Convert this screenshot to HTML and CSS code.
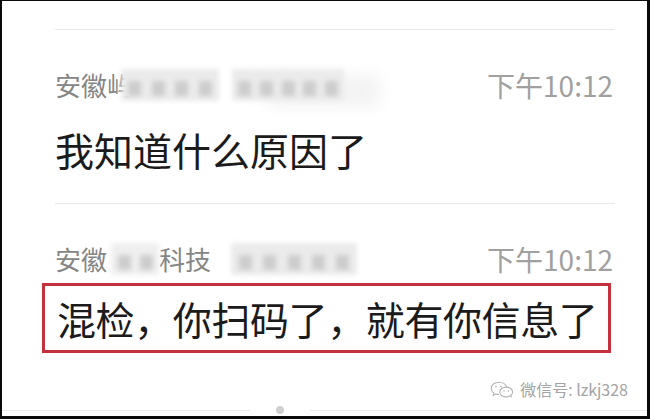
FILE: index.html
```html
<!DOCTYPE html>
<html>
<head>
    <meta charset="utf-8">
    <title>聊天记录</title>
    <link rel="stylesheet" href="styles.css">
</head>
<body>
    <div class="frame">
        <div class="chat">
            <div class="rule"></div>

            <!-- first message -->
            <div class="msg">
                <div class="meta">
                    <span class="name">安徽<span class="cut">屿</span><span class="mosaic m-a"><i></i><i></i><i></i><i></i></span><span class="mosaic m-b"><i></i><i></i><i></i><i></i><i></i></span></span>
                    <span class="time">下午10:12</span>
                </div>
                <p class="text">我知道什么原因了</p>
            </div>

            <div class="rule"></div>

            <!-- second message, marked with the red box -->
            <div class="msg">
                <div class="meta">
                    <span class="name">安徽<span class="mosaic m-c"><i></i><i></i></span>科技<span class="mosaic m-d"><i></i><i></i><i></i><i></i><i></i></span></span>
                    <span class="time">下午10:12</span>
                </div>
                <p class="text marked">混检，你扫码了，就有你信息了</p>
            </div>
        </div>

        <div class="watermark">
            <svg class="wx" width="24" height="17" viewBox="0 0 24 17">
                <path d="M9 1.2C4.6 1.2 1.2 4 1.2 7.4c0 1.9 1 3.6 2.7 4.8l-.7 2.3 2.7-1.4c1 .3 2 .4 3.1.4" fill="none" stroke="#b4b4b4" stroke-width="1.1"/>
                <path d="M9 1.2c3.9 0 7.1 2.3 7.7 5.3" fill="none" stroke="#b4b4b4" stroke-width="1.1"/>
                <ellipse cx="16.2" cy="11" rx="6.4" ry="4.9" fill="none" stroke="#b4b4b4" stroke-width="1.1"/>
                <path d="M20.4 14.8l1.2 1.6" stroke="#b4b4b4" stroke-width="1.1"/>
                <circle cx="6" cy="5.6" r=".9" fill="#b4b4b4"/>
                <circle cx="11" cy="5.6" r=".9" fill="#b4b4b4"/>
                <circle cx="14" cy="10" r=".8" fill="#b4b4b4"/>
                <circle cx="18.4" cy="10" r=".8" fill="#b4b4b4"/>
            </svg>
            <span>微信号: lzkj328</span>
        </div>

        <div class="foot">
            <span class="line left"></span>
            <span class="dot"></span>
            <span class="line right"></span>
        </div>
    </div>
</body>
</html>
```

FILE: styles.css
```css
* {
    box-sizing: border-box;
}

body {
    margin: 0;
    background: #000;
    font-family: "Noto Sans CJK SC", "Noto Sans", sans-serif;
}

/* screenshot frame with the dark edge round it */
.frame {
    width: 650px;
    height: 419px;
    background: #fff;
    border-style: solid;
    border-color: #0a0a0a;
    border-width: 1px 3px 3px 2px;
    display: flex;
    flex-direction: column;
    overflow: hidden;
}

.chat {
    padding: 0 32px 0 53px;
}

.rule {
    height: 1px;
    background: #e8e8e8;
    margin-top: 28px;
}

.msg + .rule {
    margin-top: 30px;
}

.meta {
    display: flex;
    justify-content: space-between;
    align-items: center;
    height: 34px;
    margin-top: 38px;
    font-size: 26px;
    line-height: 34px;
}

.name {
    color: #858585;
    display: flex;
    align-items: center;
}

.time {
    color: #a0a0a0;
    font-size: 28px;
    margin-right: 2px;
}

/* blurred name parts, laid over the hidden characters */
.mosaic {
    display: inline-flex;
    align-items: flex-end;
    justify-content: space-around;
    height: 32px;
    padding: 0 2px 5px;
    background: #ebebeb;
    filter: blur(2.4px);
}

.mosaic i {
    width: 13px;
    height: 15px;
    background: #cdcdcd;
}

.m-a {
    width: 98px;
    margin-left: -12px;
}

.m-b {
    width: 112px;
    margin-left: 13px;
    box-shadow: 36px 6px 16px #f3f3f3;
}

.m-c {
    width: 48px;
    margin: 0 0 0 4px;
    background: #efefef;
}

.m-d {
    width: 126px;
    margin-left: 20px;
}

.text {
    margin: 23px 0 0;
    font-size: 39px;
    line-height: 48px;
    color: #1b1b1b;
    white-space: nowrap;
}

.marked {
    margin: 7px 4px 0 -13px;
    padding: 8px 4px 8px 12px;
    border: 3px solid #c4313d;
    letter-spacing: -0.4px;
}

.watermark {
    display: flex;
    justify-content: flex-end;
    align-items: center;
    gap: 6px;
    margin-top: 26px;
    padding-right: 19px;
    font-size: 16px;
    line-height: 20px;
    color: #a4a4a4;
}

.wx {
    margin-top: 1px;
}

.foot {
    display: flex;
    align-items: center;
    margin-top: 7px;
    height: 8px;
}

.line {
    height: 1px;
    background: #ececec;
}

.left {
    width: 248px;
}

.dot {
    width: 8px;
    height: 8px;
    border-radius: 50%;
    background: #d0d0d0;
    margin: 0 26px 0 26px;
    filter: blur(0.6px);
}

.right {
    flex: 1;
}
```
